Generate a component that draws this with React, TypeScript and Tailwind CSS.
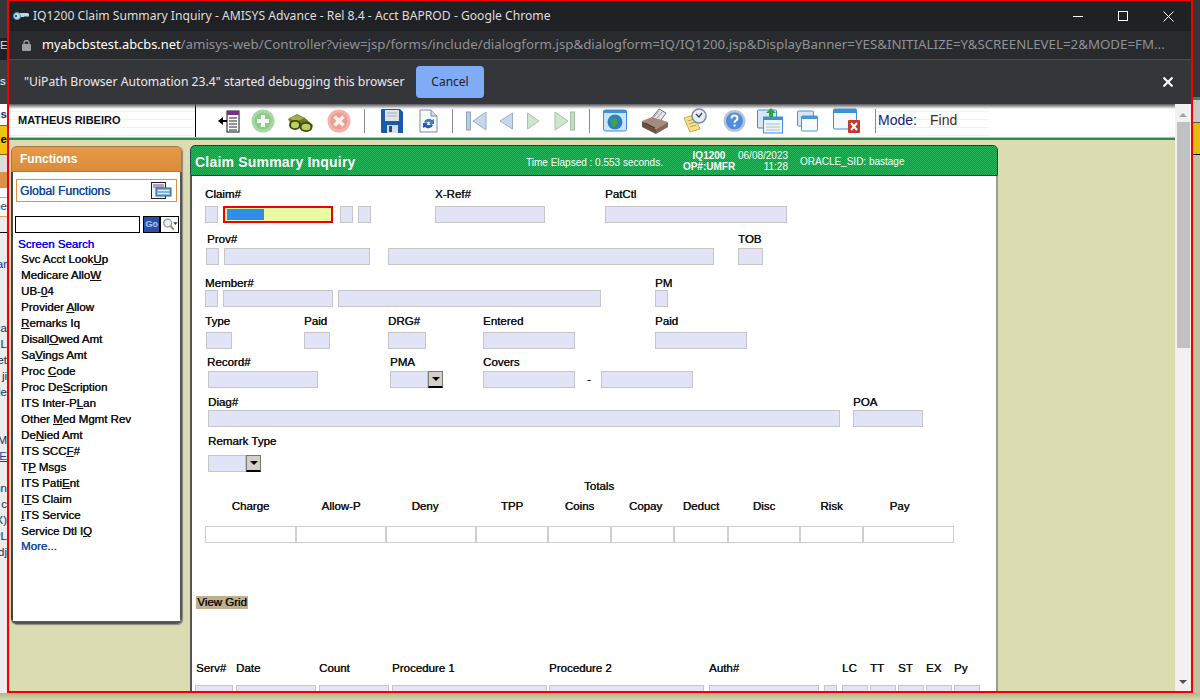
import React from 'react';

const sans = "font-['Liberation_Sans',Arial,sans-serif]";
const chrome = "font-['Noto_Sans','Open_Sans',sans-serif]";
const heavy = '[text-shadow:0.35px_0_0_currentColor]';

// plain lilac input of the AMISYS form
function Box({ className = '' }: { className?: string }) {
  return <div className={`h-[17px] shrink-0 bg-[#e3e3f8] border border-[#c6c6c6] ${className}`} />;
}

function Lbl({ className = '', children }: { className?: string; children: React.ReactNode }) {
  return <div className={`shrink-0 whitespace-nowrap leading-[14px] ${className}`}>{children}</div>;
}

function DropBtn() {
  return (
    <div className="w-[15px] h-[17px] shrink-0 bg-[#d4d0c8] border border-[#777] border-b-2 border-b-black flex items-center justify-center">
      <div className="w-0 h-0 border-l-[4px] border-r-[4px] border-t-[4px] border-l-transparent border-r-transparent border-t-black" />
    </div>
  );
}

const menu: [string, string, string][] = [
  ['Svc Acct Look', 'U', 'p'],
  ['Medicare Allo', 'W', ''],
  ['UB-', '0', '4'],
  ['Provider ', 'A', 'llow'],
  ['', 'R', 'emarks Iq'],
  ['Disall', 'O', 'wed Amt'],
  ['Sa', 'V', 'ings Amt'],
  ['Proc ', 'C', 'ode'],
  ['Proc De', 'S', 'cription'],
  ['ITS Inter-P', 'L', 'an'],
  ['Other ', 'M', 'ed Mgmt Rev'],
  ['De', 'N', 'ied Amt'],
  ['ITS SCC', 'F', '#'],
  ['T', 'P', ' Msgs'],
  ['ITS Pati', 'E', 'nt'],
  ['I', 'T', 'S Claim'],
  ['', 'I', 'TS Service'],
  ['Service Dtl I', 'Q', ''],
];

function Sep({ className = '' }: { className?: string }) {
  return <div className={`w-px h-[24px] bg-[#8a8a8a] shrink-0 ${className}`} />;
}

const stripes = 'bg-[repeating-linear-gradient(180deg,#ffffff_0px,#ffffff_7px,#eef0f6_7px,#eef0f6_8px)]';

function Toolbar() {
  const ic = 'h-[26px] shrink-0';
  return (
    <div className="h-[33px] shrink-0 flex items-center bg-white relative">
      <div className={`w-[187px] h-full shrink-0 border-r border-black flex items-center pl-[9px] text-[11px] font-bold text-[#10101a] ${stripes} ${sans}`}>
        MATHEUS RIBEIRO
      </div>
      {/* list with arrow */}
      <svg viewBox="0 0 22 26" className={`ml-[22px] w-[22px] ${ic}`}>
        <rect x="9" y="3" width="12" height="21" fill="#fff" stroke="#111" />
        <rect x="9" y="3" width="12" height="4" fill="#7a2f8f" />
        <path d="M11 10h8M11 13h8M11 16h8M11 19h8M11 22h8" stroke="#222" />
        <path d="M0 13l5-4v3h4v2H5v3z" fill="#000" />
      </svg>
      {/* add */}
      <svg viewBox="0 0 24 26" className={`ml-[11px] w-[24px] ${ic}`}>
        <circle cx="12" cy="13" r="11.5" fill="#a9d7a4" />
        <circle cx="12" cy="13" r="8.5" fill="#8fca8c" />
        <path d="M12 7v12M6 13h12" stroke="#f2faf0" strokeWidth="4" />
      </svg>
      {/* binoculars */}
      <svg viewBox="0 0 25 26" className={`ml-[13px] w-[25px] ${ic}`}>
        <path d="M0 11l9-5 8 4 8 7-3 6-8-2-4-4-6 1z" fill="#6e7a1e" />
        <path d="M1 10l8-3 7 3-8 4z" fill="#a4ad4a" />
        <ellipse cx="7" cy="17" rx="6" ry="5" fill="#3f4a0e" />
        <ellipse cx="18" cy="19" rx="6.500" ry="5" fill="#3f4a0e" />
        <ellipse cx="7" cy="17" rx="4" ry="3.200" fill="#bcd062" />
        <ellipse cx="18" cy="19" rx="4.500" ry="3.200" fill="#bcd062" />
      </svg>
      {/* cancel */}
      <svg viewBox="0 0 24 26" className={`ml-[14px] w-[24px] ${ic}`}>
        <circle cx="12" cy="13" r="11.5" fill="#f2b4a8" />
        <circle cx="12" cy="13" r="8.5" fill="#ee9c8e" />
        <path d="M7.5 8.5l9 9M16.5 8.5l-9 9" stroke="#fdf3f0" strokeWidth="3.6" />
      </svg>
      <Sep className="ml-[13px]" />
      {/* save */}
      <svg viewBox="0 0 24 26" className={`ml-[15px] w-[24px] ${ic}`}>
        <path d="M2 1h18l3 3v21H2q-1 0-1-1V2q0-1 1-1z" fill="#1a5aa8" />
        <rect x="5" y="2" width="14" height="11" fill="#dfe3e8" />
        <path d="M7 5h10M7 8h10" stroke="#a8b0ba" />
        <rect x="7" y="17" width="11" height="8" fill="#d8dce2" />
        <rect x="9" y="18" width="3" height="6" fill="#1f4f90" />
      </svg>
      {/* refresh doc */}
      <svg viewBox="0 0 21 26" className={`ml-[14px] w-[21px] ${ic}`}>
        <path d="M2 2h11l6 6v16H2z" fill="#f7f9fc" stroke="#7d8aa0" />
        <path d="M13 2v6h6" fill="#d5dcea" stroke="#7d8aa0" />
        <path d="M6 14a5 5 0 0 1 8-2l2-1v5h-5l1.500-1.500A3 3 0 0 0 8 15z" fill="#2e7fd0" />
        <path d="M15 17a5 5 0 0 1-8 2l-2 1v-5h5l-1.500 1.500A3 3 0 0 0 13 16z" fill="#1c5fae" />
      </svg>
      <Sep className="ml-[13px]" />
      <svg viewBox="0 0 21 26" className={`ml-[13px] w-[21px] ${ic}`}>
        <rect x="0.500" y="4" width="4" height="18" fill="#b9cde2" stroke="#8fa6c0" />
        <path d="M20 4v18L7 13z" fill="#c7d8ea" stroke="#98aec8" />
      </svg>
      <svg viewBox="0 0 14 26" className={`ml-[12px] w-[14px] ${ic}`}>
        <path d="M13.500 5v16L1 13z" fill="#c7d8ea" stroke="#98aec8" />
      </svg>
      <svg viewBox="0 0 13 26" className={`ml-[14px] w-[13px] ${ic}`}>
        <path d="M0.500 5v16L12 13z" fill="#cfe5cf" stroke="#a2c4a2" />
      </svg>
      <svg viewBox="0 0 21 26" className={`ml-[14px] w-[21px] ${ic}`}>
        <path d="M1 4v18l13-9z" fill="#cfe5cf" stroke="#a2c4a2" />
        <rect x="16.500" y="4" width="4" height="18" fill="#c2dcc2" stroke="#a2c4a2" />
      </svg>
      <Sep className="ml-[14px]" />
      {/* globe window */}
      <svg viewBox="0 0 24 26" className={`ml-[13px] w-[24px] ${ic}`}>
        <rect x="0.500" y="2" width="23" height="21" rx="2" fill="#cfe3f6" stroke="#3f8ed8" />
        <rect x="0.500" y="2" width="23" height="3" fill="#3f8ed8" />
        <circle cx="12" cy="14" r="7.500" fill="#2f7fc4" />
        <path d="M7 11l6-1 2 5-4 5-3-4z" fill="#3fa34a" />
      </svg>
      {/* printer */}
      <svg viewBox="0 0 26 26" className={`ml-[15px] w-[26px] ${ic}`}>
        <path d="M9 11l8-10 7 4-7 10z" fill="#e4e4ea" stroke="#777" />
        <path d="M12 9l5-6M15 10l5-6" stroke="#999" />
        <path d="M0 13l10-4 16 5-12 7z" fill="#a58a7a" />
        <path d="M0 13v6l14 7v-5z" fill="#6b4f42" />
        <path d="M26 14v5l-12 7v-5z" fill="#836558" />
        <path d="M3 15l10 5" stroke="#3f2c24" />
      </svg>
      {/* notes with clock */}
      <svg viewBox="0 0 24 26" className={`ml-[15px] w-[24px] ${ic}`}>
        <path d="M1 10l10-3 6 14-10 3z" fill="#f3e08e" stroke="#c7ad52" />
        <path d="M5 13l6-2M6 16l6-2M7 19l6-2" stroke="#b89f4a" />
        <circle cx="16" cy="8" r="7" fill="#e8edf4" stroke="#7f8ba0" strokeWidth="1.500" />
        <path d="M13 6l3 3 3-4" stroke="#33415c" strokeWidth="1.300" fill="none" />
      </svg>
      {/* help */}
      <svg viewBox="0 0 23 26" className={`ml-[16px] w-[23px] ${ic}`}>
        <circle cx="11.500" cy="13" r="11" fill="#b9c3d4" />
        <circle cx="11.500" cy="13" r="8.500" fill="#4f8de0" />
        <path d="M8.500 10.500q0-3 3-3t3 2.800q0 1.500-2 2.500-1 .6-1 2" stroke="#fff" strokeWidth="2" fill="none" />
        <rect x="10.500" y="16.500" width="2" height="2" fill="#fff" />
      </svg>
      {/* update window */}
      <svg viewBox="0 0 26 26" className={`ml-[11px] w-[26px] ${ic}`}>
        <rect x="0.500" y="2" width="19" height="18" rx="1" fill="#d6e6f7" stroke="#3f8ed8" />
        <rect x="6.500" y="9" width="19" height="16" fill="#edf4fb" stroke="#3f8ed8" />
        <rect x="6.500" y="9" width="19" height="3" fill="#3f8ed8" />
        <path d="M9 16h14M9 19h14M9 22h14" stroke="#a9bfd8" />
        <path d="M12 9V5H9l5-5 5 5h-3v4z" fill="#2ea43a" />
      </svg>
      {/* windows */}
      <svg viewBox="0 0 21 26" className={`ml-[14px] w-[21px] ${ic}`}>
        <rect x="0.500" y="3" width="16" height="15" rx="1" fill="#d6e6f7" stroke="#4a96dc" />
        <rect x="4.500" y="8" width="16" height="15" rx="1" fill="#f7fafd" stroke="#4a96dc" />
        <rect x="4.500" y="8" width="16" height="3" fill="#4a96dc" />
      </svg>
      {/* close window */}
      <svg viewBox="0 0 27 26" className={`ml-[15px] w-[27px] ${ic}`}>
        <rect x="0.500" y="1" width="23" height="20" rx="1" fill="#f4f8fc" stroke="#3f8ed8" />
        <rect x="0.500" y="1" width="23" height="4" fill="#3f8ed8" />
        <rect x="15" y="12" width="12" height="13" rx="1" fill="#c23a2e" />
        <path d="M18 15l6 7M24 15l-6 7" stroke="#fff" strokeWidth="2" />
      </svg>
      <Sep className="ml-[15px]" />
      <div className={`flex-1 h-full flex items-center relative ${sans}`}>
        <div className={`w-[113px] h-full absolute left-0 top-0 ${stripes}`} />
        <span className="relative ml-[2px] w-[52px] text-[14px] text-[#1a1a7a]">Mode:</span>
        <span className="relative text-[14px] text-[#4a2a10]">Find</span>
      </div>
      {/* shadow dropped by the infobar above */}
      <div className="absolute left-0 right-0 top-0 h-[5px] bg-gradient-to-b from-[#55565a] to-transparent pointer-events-none" />
    </div>
  );
}

function Functions() {
  return (
    <div className={`w-[171px] h-[478px] mt-[6px] ml-[2px] shrink-0 flex flex-col rounded-[5px] overflow-hidden border-b-[3px] border-b-[#555] shadow-[1px_1px_1px_#888] text-[11.500px] ${sans}`}>
      <div className="h-[26px] shrink-0 bg-gradient-to-b from-[#e49a48] to-[#da8c3a] border border-[#a97a45] rounded-t-[5px] flex items-center pl-[8px] text-white font-bold text-[12px]">
        Functions
      </div>
      <div className={`flex-1 bg-white border-l-2 border-r-2 border-l-[#444] border-r-[#555] ${heavy}`}>
        <div className="ml-[3px] mt-[7px] w-[161px] h-[23px] border border-[#e0913e] flex items-center justify-between pl-[3px] pr-[4px] text-[12px] text-[#12479d]">
          <span>Global Functions</span>
          <svg viewBox="0 0 21 18" className="w-[21px] h-[18px]">
            <rect x="0.500" y="0.500" width="14" height="16" fill="#f2f2f2" stroke="#222" />
            <path d="M2 3h11M2 5h11" stroke="#7a4a9a" />
            <rect x="5" y="6" width="15" height="8" fill="#7fb2dc" stroke="#2a5a8a" />
            <path d="M7 8.500h11M7 11.500h11" stroke="#e8f2fb" />
          </svg>
        </div>
        <div className="flex ml-[2px] mt-[14px] h-[17px]">
          <div className="w-[125px] border border-black bg-white" />
          <div className="ml-[3px] w-[17px] bg-[#2a4fa8] border border-black text-[#9ab4e6] text-[9px] font-bold flex items-center justify-center">Go</div>
          <div className="w-[19px] border border-black flex items-center pl-px">
            <svg viewBox="0 0 17 15" className="w-[17px] h-[15px]">
              <circle cx="6" cy="6" r="4.200" fill="#eef2f4" stroke="#8a9aa0" strokeWidth="1.400" />
              <path d="M9 9l3.500 4" stroke="#a08a5a" strokeWidth="2" />
              <path d="M12 5h4.500l-2.200 3z" fill="#333" />
            </svg>
          </div>
        </div>
        <Lbl className="ml-[5px] mt-[4px] text-[#0000f0]">Screen Search</Lbl>
        {menu.map(([a, u, b], i) => (
          <div key={i} className="h-[16px] leading-[16px] ml-[8px] whitespace-nowrap text-[#111]">
            {a}<u>{u}</u>{b}
          </div>
        ))}
        <div className="h-[16px] leading-[14px] ml-[8px] text-[#12479d]">More...</div>
      </div>
    </div>
  );
}

function ClaimForm() {
  const cell = 'border border-[#cfcfcf]';
  return (
    <div className={`w-[808px] ml-[8px] mt-[5px] shrink-0 flex flex-col text-[11.500px] text-[#111] ${sans}`}>
      <div className="h-[31px] shrink-0 rounded-t-[5px] border border-[#1c3f5a] bg-[conic-gradient(#2ab65c_25%,#0c9a40_0_50%,#2ab65c_0_75%,#0c9a40_0)] bg-[length:2px_2px] flex items-center text-white relative">
        <span className="ml-[4px] w-[331px] text-[14px] font-bold tracking-[0.2px] mt-[4px]">Claim Summary Inquiry</span>
        <span className="w-[157px] text-[10px] mt-[3px]">Time Elapsed : 0.553 seconds.</span>
        <div className="w-[56px] text-[10px] font-bold leading-[11px] text-center mt-px -ml-[2px]">IQ1200<br />OP#:UMFR</div>
        <div className="w-[50px] text-[10px] leading-[11px] text-right mt-px ml-px">06/08/2023<br />11:28</div>
        <span className="ml-[12px] text-[10px] mt-[2px]">ORACLE_SID: bastage</span>
      </div>
      <div className={`flex-1 bg-white border-l-2 border-l-[#555] border-r-2 border-r-[#9a9a9a] overflow-hidden ${heavy}`}>
        {/* claim row */}
        <div className="flex mt-[11px] h-[14px]">
          <Lbl className="ml-[13px] w-[230px]">Claim#</Lbl>
          <Lbl className="w-[170px]">X-Ref#</Lbl>
          <Lbl>PatCtl</Lbl>
        </div>
        <div className="flex mt-[5px]">
          <Box className="ml-[13px] w-[13px]" />
          <div className="ml-[5px] w-[110px] h-[17px] border-2 border-[#f00000] bg-[#ecfaa6] p-px pl-[2px]">
            <div className="w-[37px] h-full bg-[#318ee8]" />
          </div>
          <Box className="ml-[7px] w-[13px]" />
          <Box className="ml-[5px] w-[13px]" />
          <Box className="ml-[64px] w-[110px]" />
          <Box className="ml-[60px] w-[182px]" />
        </div>
        {/* prov */}
        <div className="flex mt-[9px] h-[14px]">
          <Lbl className="ml-[15px] w-[531px]">Prov#</Lbl>
          <Lbl>TOB</Lbl>
        </div>
        <div className="flex mt-[2px]">
          <Box className="ml-[14px] w-[13px]" />
          <Box className="ml-[5px] w-[146px]" />
          <Box className="ml-[18px] w-[326px]" />
          <Box className="ml-[24px] w-[25px]" />
        </div>
        {/* member */}
        <div className="flex mt-[11px] h-[14px]">
          <Lbl className="ml-[13px] w-[450px]">Member#</Lbl>
          <Lbl>PM</Lbl>
        </div>
        <div className="flex">
          <Box className="ml-[13px] w-[13px]" />
          <Box className="ml-[5px] w-[110px]" />
          <Box className="ml-[5px] w-[263px]" />
          <Box className="ml-[54px] w-[13px]" />
        </div>
        {/* type */}
        <div className="flex mt-[7px] h-[14px]">
          <Lbl className="ml-[13px] w-[99px]">Type</Lbl>
          <Lbl className="w-[84px]">Paid</Lbl>
          <Lbl className="w-[95px]">DRG#</Lbl>
          <Lbl className="w-[172px]">Entered</Lbl>
          <Lbl>Paid</Lbl>
        </div>
        <div className="flex mt-[4px]">
          <Box className="ml-[14px] w-[26px]" />
          <Box className="ml-[72px] w-[26px]" />
          <Box className="ml-[58px] w-[38px]" />
          <Box className="ml-[57px] w-[92px]" />
          <Box className="ml-[80px] w-[92px]" />
        </div>
        {/* record */}
        <div className="flex mt-[6px] h-[14px]">
          <Lbl className="ml-[15px] w-[183px]">Record#</Lbl>
          <Lbl className="w-[93px]">PMA</Lbl>
          <Lbl>Covers</Lbl>
        </div>
        <div className="flex mt-[2px]">
          <Box className="ml-[16px] w-[110px]" />
          <Box className="ml-[72px] w-[38px]" />
          <DropBtn />
          <Box className="ml-[40px] w-[92px]" />
          <div className="ml-[12px] w-[14px] leading-[17px]">-</div>
          <Box className="w-[92px]" />
        </div>
        {/* diag */}
        <div className="flex mt-[7px] h-[14px]">
          <Lbl className="ml-[16px] w-[645px]">Diag#</Lbl>
          <Lbl>POA</Lbl>
        </div>
        <div className="flex mt-px">
          <Box className="ml-[16px] w-[632px]" />
          <Box className="ml-[13px] w-[70px]" />
        </div>
        <Lbl className="ml-[16px] mt-[7px]">Remark Type</Lbl>
        <div className="flex mt-[7px]">
          <Box className="ml-[16px] w-[38px]" />
          <DropBtn />
        </div>
        {/* totals */}
        <Lbl className="ml-[392px] mt-[7px]">Totals</Lbl>
        <div className="flex mt-[6px] ml-[13px] h-[14px] text-center leading-[14px]">
          <div className="w-[91px]">Charge</div>
          <div className="w-[90px]">Allow-P</div>
          <div className="w-[90px] pr-[12px]">Deny</div>
          <div className="w-[72px]">TPP</div>
          <div className="w-[63px]">Coins</div>
          <div className="w-[63px] pl-[6px]">Copay</div>
          <div className="w-[54px]">Deduct</div>
          <div className="w-[72px]">Disc</div>
          <div className="w-[63px]">Risk</div>
          <div className="w-[91px] pr-[18px]">Pay</div>
        </div>
        <div className="flex mt-[13px] ml-[13px] h-[17px]">
          <div className={`w-[91px] ${cell}`} />
          <div className={`w-[90px] ${cell}`} />
          <div className={`w-[90px] ${cell}`} />
          <div className={`w-[72px] ${cell}`} />
          <div className={`w-[63px] ${cell}`} />
          <div className={`w-[63px] ${cell}`} />
          <div className={`w-[54px] ${cell}`} />
          <div className={`w-[72px] ${cell}`} />
          <div className={`w-[63px] ${cell}`} />
          <div className={`w-[91px] ${cell}`} />
        </div>
        <div className="ml-[4px] mt-[53px] w-[52px] h-[13px] bg-[#c2ae8b] leading-[13px] text-center whitespace-nowrap">View Grid</div>
        {/* service lines */}
        <div className="flex mt-[52px] h-[14px]">
          <Lbl className="ml-[4px] w-[40px]">Serv#</Lbl>
          <Lbl className="w-[83px]">Date</Lbl>
          <Lbl className="w-[73px]">Count</Lbl>
          <Lbl className="w-[157px]">Procedure 1</Lbl>
          <Lbl className="w-[160px]">Procedure 2</Lbl>
          <Lbl className="w-[133px]">Auth#</Lbl>
          <Lbl className="w-[28px]">LC</Lbl>
          <Lbl className="w-[28px]">TT</Lbl>
          <Lbl className="w-[28px]">ST</Lbl>
          <Lbl className="w-[28px]">EX</Lbl>
          <Lbl>Py</Lbl>
        </div>
        <div className="flex mt-[10px]">
          <Box className="ml-[3px] w-[38px]" />
          <Box className="ml-[3px] w-[80px]" />
          <Box className="ml-[3px] w-[70px]" />
          <Box className="ml-[3px] w-[155px]" />
          <Box className="ml-[2px] w-[155px]" />
          <Box className="ml-[5px] w-[110px]" />
          <Box className="ml-[5px] w-[13px]" />
          <Box className="ml-[5px] w-[26px]" />
          <Box className="ml-[2px] w-[26px]" />
          <Box className="ml-[2px] w-[26px]" />
          <Box className="ml-[2px] w-[26px]" />
          <Box className="ml-[2px] w-[26px]" />
        </div>
      </div>
    </div>
  );
}

function LeftPeek() {
  const row = 'flex justify-end whitespace-nowrap overflow-hidden';
  return (
    <div className={`w-[7px] shrink-0 flex flex-col bg-[#ececec] overflow-hidden text-[11.500px] ${sans}`}>
      <div className="h-[38px] bg-[#35363a]" />
      <div className={`h-[22px] bg-[#202124] text-[#d8d8d8] pl-0 leading-[14px]`}>E</div>
      <div className={`h-[44px] bg-[#3c3d40] text-white ${row} items-center justify-start`}>s</div>
      <div className={`h-[21px] bg-white text-[#1a2a6a] font-bold ${row} items-center`}>ns</div>
      <div className={`h-[30px] bg-[#f2c40f] text-black font-bold ${row} items-center border-y border-[#7a6a10]`}>e</div>
      <div className="h-[17px] bg-[#dcdcdc]" />
      <div className="h-[16px] bg-[#d8924a]" />
      <div className="h-[9px] bg-white" />
      <div className={`h-[20px] bg-white text-[#334] ${row} items-center border-y border-[#e0a060]`}>ne</div>
      <div className="h-[16px] border-b border-black" />
      <div className="h-[24px]" />
      <div className={`h-[16px] text-[#1030c0] ${row} items-center`}>ar</div>
      <div className="h-[48px]" />
      {['ca', 'L', 'et', 'ji', 'de'].map(t => (
        <div key={t} className={`h-[16px] text-[#203050] ${row} items-center`}>{t}</div>
      ))}
      <div className="h-[32px]" />
      <div className={`h-[16px] text-[#203050] ${row} items-center`}>M</div>
      <div className={`h-[16px] text-[#12479d] underline ${row} items-center`}>E</div>
      <div className="h-[16px]" />
      {['nn', 'c', 'X)', 'PL', 'dj'].map(t => (
        <div key={t} className={`h-[16px] text-[#203050] ${row} items-center`}>{t}</div>
      ))}
    </div>
  );
}

function RightPeek() {
  return (
    <div className="w-[7px] shrink-0 flex flex-col bg-[#c2c2a0]">
      <div className="h-[97px] bg-[#35363a]" />
      <div className="h-[3px] bg-[#2e8b57]" />
      <div className="h-[23px] bg-[#c8c8c4] border-b border-[#555]" />
      <div className="h-[32px] bg-[#e6bb10] border-b border-black" />
    </div>
  );
}

export default function App() {
  return (
    <div className="w-[1200px] h-[700px] overflow-hidden flex flex-col bg-[#c8c8a4]">
      <div className="h-[693px] shrink-0 flex">
        <LeftPeek />
        <div className="w-[1186px] shrink-0 border-2 border-t border-[#f00000] flex flex-col overflow-hidden">
          {/* title bar */}
          <div className={`h-[30px] shrink-0 bg-[#202124] flex items-center text-[12.150px] text-[#dedede] ${chrome}`}>
            <svg viewBox="0 0 16 10" className="ml-[4px] w-[16px] h-[10px]">
              <path d="M6 2h9l1 1v2l-1 1-1-1-1 1-1-1-1 1H6z" fill="#b9d8ee" />
              <circle cx="4" cy="5" r="3.500" fill="#b9d8ee" stroke="#5a9ac8" />
              <circle cx="3" cy="5" r="1" fill="#202124" />
            </svg>
            <span className="ml-[4px] whitespace-nowrap">IQ1200 Claim Summary Inquiry - AMISYS Advance - Rel 8.4 - Acct BAPROD - Google Chrome</span>
            <div className="ml-auto flex items-center">
              <div className="w-[10px] h-px bg-white" />
              <div className="ml-[35px] w-[10px] h-[10px] border border-white" />
              <svg viewBox="0 0 11 11" className="ml-[35px] mr-[17px] w-[11px] h-[11px]">
                <path d="M0.500 0.500l10 10M10.500 0.500l-10 10" stroke="#fff" />
              </svg>
            </div>
          </div>
          {/* address bar */}
          <div className={`h-[29px] shrink-0 bg-[#292a2d] border-b border-[#4c4d50] flex items-center text-[13.300px] text-[#8e9297] whitespace-nowrap overflow-hidden ${chrome}`}>
            <svg viewBox="0 0 9 11" className="ml-[13px] w-[9px] h-[11px]">
              <rect x="0" y="4" width="9" height="7" rx="1" fill="#9aa0a6" />
              <path d="M2 4V3a2.500 2.500 0 0 1 5 0v1" stroke="#9aa0a6" fill="none" strokeWidth="1.300" />
            </svg>
            <span className="ml-[11px] w-[1131px] overflow-hidden"><span className="text-white text-[12.850px]">myabcbstest.abcbs.net</span>/amisys-web/Controller?view=jsp/forms/include/dialogform.jsp&amp;dialogform=IQ/IQ1200.jsp&amp;DisplayBanner=YES&amp;INITIALIZE=Y&amp;SCREENLEVEL=2&amp;MODE=FM...</span>
          </div>
          {/* debugging infobar */}
          <div className={`h-[44px] shrink-0 bg-[#35363a] flex items-center text-[12.200px] text-[#e8eaed] ${chrome}`}>
            <span className="ml-[15px] w-[392px] whitespace-nowrap">"UiPath Browser Automation 23.4" started debugging this browser</span>
            <div className="w-[68px] h-[32px] rounded bg-[#80acf5] text-[#202124] text-[12px] flex items-center justify-center">Cancel</div>
            <svg viewBox="0 0 10 10" className="ml-auto mr-[18px] w-[10px] h-[10px]">
              <path d="M0.500 0.500l9 9M9.500 0.500l-9 9" stroke="#fff" strokeWidth="2" />
            </svg>
          </div>
          <div className="flex-1 flex min-h-0">
            <div className="w-[1166px] shrink-0 flex flex-col min-h-0">
              <Toolbar />
              <div className="h-[3px] shrink-0 bg-[#2e8b57] border-t border-[#9cc8b0]" />
              <div className="flex-1 min-h-0 bg-[#dcdcb2] flex overflow-hidden">
                <Functions />
                <ClaimForm />
              </div>
            </div>
            {/* scrollbar */}
            <div className="w-[16px] shrink-0 bg-[#f1f1f1] flex flex-col items-center">
              <div className="h-[18px] w-full flex items-center justify-center pt-[3px]">
                <div className="w-0 h-0 border-l-[4px] border-r-[4px] border-b-[4px] border-l-transparent border-r-transparent border-b-[#a3a3a3]" />
              </div>
              <div className="w-[13px] h-[226px] bg-[#c1c1c1]" />
              <div className="mt-auto mb-[7px] w-0 h-0 border-l-[4px] border-r-[4px] border-t-[4px] border-l-transparent border-r-transparent border-t-[#505050]" />
            </div>
          </div>
        </div>
        <RightPeek />
      </div>
      <div className="flex-1 bg-gradient-to-b from-[#b4b48c] to-[#d6d6ae]" />
    </div>
  );
}
